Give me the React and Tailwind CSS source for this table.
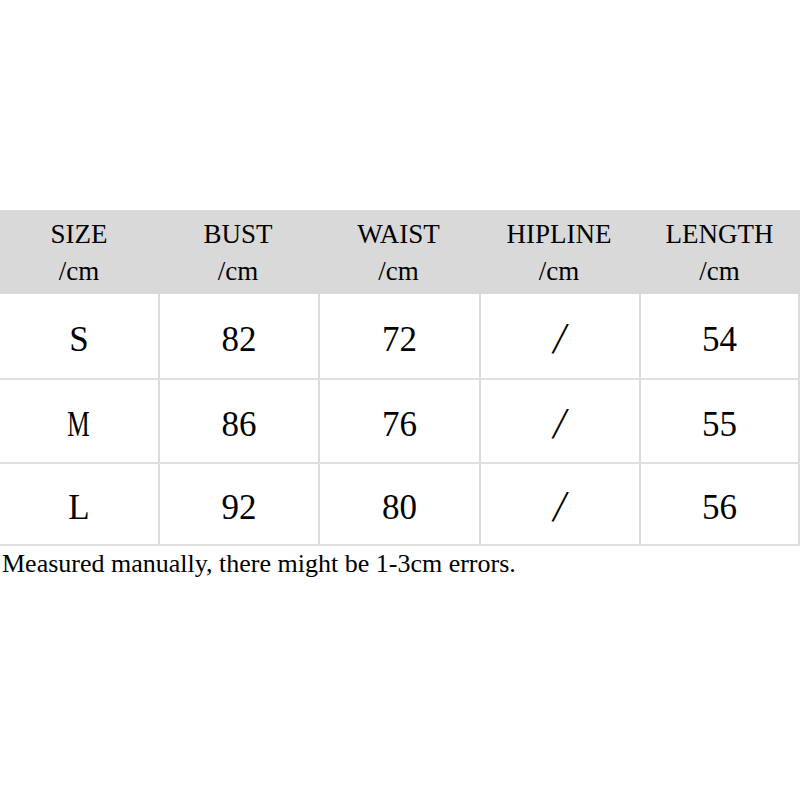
const HEADERS = ['SIZE', 'BUST', 'WAIST', 'HIPLINE', 'LENGTH'];

const ROWS = [
  ['S', '82', '72', '/', '54'],
  ['M', '86', '76', '/', '55'],
  ['L', '92', '80', '/', '56'],
];

const COLS = 'grid grid-cols-[158px_160px_161px_160px_161px]';

function Value({ v }) {
  if (v === '/') {
    return <span className="inline-block text-[44px] leading-none font-light -skew-x-[10deg] -translate-y-[2px]">/</span>;
  }
  if (v === 'M') {
    return <span className="inline-block scale-x-[0.72]">M</span>;
  }
  return <span>{v}</span>;
}

export default function App() {
  return (
    <div className="w-[800px] h-[800px] bg-white font-['Liberation_Serif',serif] text-black">
      <div className="h-[210px]" />
      <div className={`${COLS} h-[84px] bg-[#d9d9d9]`}>
        {HEADERS.map((h) => (
          <div key={h} className="flex flex-col items-center justify-center pt-[2px] text-[27px] leading-[37px]">
            <span>{h}</span>
            <span>/cm</span>
          </div>
        ))}
      </div>
      {ROWS.map((row, i) => (
        <div
          key={i}
          className={`${COLS} h-[84px] ${i > 0 ? 'border-t-2 border-[#e0e0e0]' : ''} ${i === ROWS.length - 1 ? 'border-b-2 border-[#e0e0e0]' : ''}`}
        >
          {row.map((v, j) => (
            <div
              key={j}
              className={`flex items-center justify-center pt-[9px] text-[35px] ${j > 0 ? 'border-l-2 border-[#dcdcdc]' : ''} ${j === 4 ? 'border-r-2 border-[#dcdcdc]' : ''}`}
            >
              <Value v={v} />
            </div>
          ))}
        </div>
      ))}
      <p className="pl-[2px] pt-[2px] text-[26px] leading-[32px]">
        Measured manually, there might be 1-3cm errors.
      </p>
    </div>
  );
}
